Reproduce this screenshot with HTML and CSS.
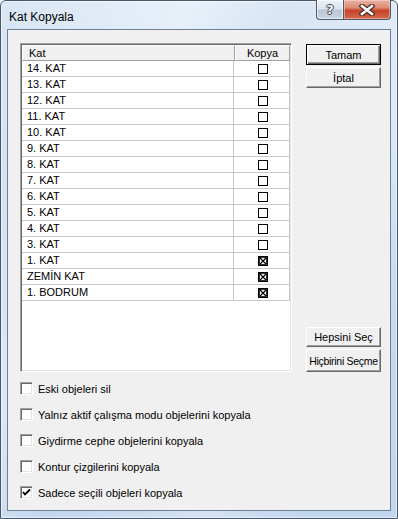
FILE: index.html
```html
<!DOCTYPE html>
<html>
<head>
<meta charset="utf-8">
<link rel="stylesheet" href="styles.css">
</head>
<body>
<div class="window">
  <div class="titlebar">
    <div class="title">Kat Kopyala</div>
    <div class="caption-buttons">
      <div class="cap-btn help"><span>?</span></div>
      <div class="cap-btn close">
        <svg width="16" height="12" viewBox="0 0 16 12">
          <path d="M3 2 L13 10 M13 2 L3 10" stroke="#4a2a24" stroke-width="5" stroke-linecap="square" fill="none"/>
          <path d="M3 2 L13 10 M13 2 L3 10" stroke="#fff" stroke-width="2.6" stroke-linecap="square" fill="none"/>
        </svg>
      </div>
    </div>
  </div>
  <div class="client">
    <div class="main">
      <div class="list">
        <div class="row header">
          <div class="c-name">Kat</div>
          <div class="c-copy">Kopya</div>
        </div>
        <div class="row"><div class="c-name">14. KAT</div><div class="c-copy"><span class="box"></span></div></div>
        <div class="row"><div class="c-name">13. KAT</div><div class="c-copy"><span class="box"></span></div></div>
        <div class="row"><div class="c-name">12. KAT</div><div class="c-copy"><span class="box"></span></div></div>
        <div class="row"><div class="c-name">11. KAT</div><div class="c-copy"><span class="box"></span></div></div>
        <div class="row"><div class="c-name">10. KAT</div><div class="c-copy"><span class="box"></span></div></div>
        <div class="row"><div class="c-name">9. KAT</div><div class="c-copy"><span class="box"></span></div></div>
        <div class="row"><div class="c-name">8. KAT</div><div class="c-copy"><span class="box"></span></div></div>
        <div class="row"><div class="c-name">7. KAT</div><div class="c-copy"><span class="box"></span></div></div>
        <div class="row"><div class="c-name">6. KAT</div><div class="c-copy"><span class="box"></span></div></div>
        <div class="row"><div class="c-name">5. KAT</div><div class="c-copy"><span class="box"></span></div></div>
        <div class="row"><div class="c-name">4. KAT</div><div class="c-copy"><span class="box"></span></div></div>
        <div class="row"><div class="c-name">3. KAT</div><div class="c-copy"><span class="box"></span></div></div>
        <div class="row"><div class="c-name">1. KAT</div><div class="c-copy"><svg class="xbox" width="10" height="10" viewBox="0 0 10 10"><rect x="0.5" y="0.5" width="9" height="9" fill="#fff" stroke="#000"/><rect x="1.5" y="1.5" width="7" height="7" fill="none" stroke="#000" stroke-width="0.8"/><path d="M2 2 L8 8 M8 2 L2 8" stroke="#000" stroke-width="1.3"/></svg></div></div>
        <div class="row"><div class="c-name">ZEMİN KAT</div><div class="c-copy"><svg class="xbox" width="10" height="10" viewBox="0 0 10 10"><rect x="0.5" y="0.5" width="9" height="9" fill="#fff" stroke="#000"/><rect x="1.5" y="1.5" width="7" height="7" fill="none" stroke="#000" stroke-width="0.8"/><path d="M2 2 L8 8 M8 2 L2 8" stroke="#000" stroke-width="1.3"/></svg></div></div>
        <div class="row"><div class="c-name">1. BODRUM</div><div class="c-copy"><svg class="xbox" width="10" height="10" viewBox="0 0 10 10"><rect x="0.5" y="0.5" width="9" height="9" fill="#fff" stroke="#000"/><rect x="1.5" y="1.5" width="7" height="7" fill="none" stroke="#000" stroke-width="0.8"/><path d="M2 2 L8 8 M8 2 L2 8" stroke="#000" stroke-width="1.3"/></svg></div></div>
      </div>
      <div class="buttons">
        <div class="btn-group">
          <div class="btn default">Tamam</div>
          <div class="btn">İptal</div>
        </div>
        <div class="btn-group">
          <div class="btn small">Hepsini Seç</div>
          <div class="btn tall">Hiçbirini Seçme</div>
        </div>
      </div>
    </div>
    <div class="options">
      <div class="opt"><span class="chk"></span><span>Eski objeleri sil</span></div>
      <div class="opt"><span class="chk"></span><span>Yalnız aktif çalışma modu objelerini kopyala</span></div>
      <div class="opt"><span class="chk"></span><span>Giydirme cephe objelerini kopyala</span></div>
      <div class="opt"><span class="chk"></span><span>Kontur çizgilerini kopyala</span></div>
      <div class="opt"><span class="chk checked"><svg width="9" height="9" viewBox="0 0 9 9"><path d="M1 4 L3 6.5 L8 1.5" stroke="#000" stroke-width="1.8" fill="none"/></svg></span><span>Sadece seçili objeleri kopyala</span></div>
    </div>
  </div>
</div>
</body>
</html>
```

FILE: styles.css
```css
* { box-sizing: border-box; }
html, body { margin: 0; padding: 0; }
body {
  width: 398px;
  height: 519px;
  overflow: hidden;
  background: #ffffff;
  font-family: "Liberation Sans", Arial, sans-serif;
  font-size: 11px;
  color: #000;
}
.window {
  width: 398px;
  height: 519px;
  border: 1px solid #48586a;
  border-radius: 6px 6px 0 0;
  background:
    linear-gradient(115deg, rgba(255,255,255,0) 0%, rgba(255,255,255,0.4) 30%, rgba(255,255,255,0) 45%, rgba(255,255,255,0.3) 70%, rgba(255,255,255,0) 85%),
    linear-gradient(180deg, #d9e6f5 0%, #c9dbf0 40%, #c2d6ee 100%);
  box-shadow: inset 0 0 0 1px rgba(255,255,255,0.55);
  display: flex;
  flex-direction: column;
}
.titlebar {
  height: 28px;
  display: flex;
  justify-content: space-between;
  align-items: flex-start;
}
.title {
  font-family: "Liberation Sans", Arial, sans-serif;
  font-size: 12px;
  color: #000;
  padding: 9px 0 0 8px;
}
.caption-buttons {
  display: flex;
  margin-right: 6px;
  margin-top: -1px;
}
.cap-btn {
  height: 20px;
  display: flex;
  align-items: center;
  justify-content: center;
  border: 1px solid #4b5a6c;
  border-top: none;
}
.cap-btn.help {
  width: 27px;
  border-right: none;
  border-radius: 0 0 0 4px;
  background: linear-gradient(180deg, #eef2f7 0%, #dde5ee 45%, #b9c7d7 55%, #c9d6e3 100%);
  box-shadow: inset 0 0 0 1px rgba(255,255,255,0.6);
}
.cap-btn.help span {
  font-family: "DejaVu Sans", sans-serif;
  font-weight: bold;
  font-size: 13px;
  color: #f4f6f8;
  text-shadow: 1px 0 0 #3d4652, -1px 0 0 #3d4652, 0 1px 0 #3d4652, 0 -1px 0 #3d4652;
  line-height: 1;
}
.cap-btn.close {
  width: 48px;
  border-radius: 0 0 4px 0;
  background: linear-gradient(180deg, #e9b3a5 0%, #dc8c74 40%, #c6442a 55%, #d2694c 100%);
  box-shadow: inset 0 0 0 1px rgba(255,220,210,0.5);
}
.client {
  flex: 1;
  margin: 0 6px 7px 6px;
  border: 1px solid #6e8096;
  background: #f0f0f0;
  padding: 13px 0 0 12px;
}
.main {
  display: flex;
  gap: 14px;
  height: 329px;
}
.list {
  width: 272px;
  height: 329px;
  background: #fff;
  border-top: 1px solid #a0a0a0;
  border-left: 1px solid #a0a0a0;
  border-right: 1px solid #fff;
  border-bottom: 1px solid #fff;
  box-shadow: inset 1px 1px 0 #696969, inset -1px -1px 0 #e3e3e3;
  padding: 1px;
  overflow: hidden;
}
.row {
  display: flex;
  height: 16px;
  border-bottom: 1px solid #c8c8c8;
}
.c-name {
  width: 212px;
  border-right: 1px solid #c8c8c8;
  padding-left: 5px;
  line-height: 15px;
  white-space: nowrap;
}
.c-copy {
  width: 56px;
  border-right: 1px solid #c8c8c8;
  display: flex;
  align-items: center;
  justify-content: center;
  padding-left: 3px;
}
.row.header {
  background: #f0f0f0;
  border-bottom: none;
}
.row.header .c-name {
  width: 213px;
  padding-left: 6px;
  border-top: 1px solid #fff;
  border-left: 1px solid #fff;
  border-right: 1px solid #a0a0a0;
  border-bottom: 1px solid #a0a0a0;
  line-height: 14px;
}
.row.header .c-copy {
  width: 55px;
  padding-left: 0;
  border-top: 1px solid #fff;
  border-left: 1px solid #fff;
  border-right: 1px solid #a0a0a0;
  border-bottom: 1px solid #a0a0a0;
  line-height: 14px;
  display: block;
  text-align: center;
}
.box {
  display: block;
  width: 10px;
  height: 10px;
  border: 1px solid #000;
  background: #fff;
}
.xbox { display: block; }
.buttons {
  width: 75px;
  display: flex;
  flex-direction: column;
  justify-content: space-between;
}
.btn-group {
  display: flex;
  flex-direction: column;
  gap: 2px;
}
.btn {
  height: 21px;
  background: #f0f0f0;
  border-top: 1px solid #fff;
  border-left: 1px solid #fff;
  border-right: 1px solid #696969;
  border-bottom: 1px solid #696969;
  box-shadow: inset -1px -1px 0 #a0a0a0;
  display: flex;
  align-items: center;
  justify-content: center;
  white-space: nowrap;
  overflow: hidden;
  font-size: 11px;
}
.btn.default {
  margin-top: 1px;
  border: 1px solid #000;
  box-shadow: inset 1px 1px 0 #fff, inset -1px -1px 0 #696969, inset -2px -2px 0 #a0a0a0;
}
.btn.small { height: 20px; }
.btn.tall {
  height: 23px;
  font-size: 10.5px;
  letter-spacing: -0.3px;
  padding: 0;
}
.options {
  margin-top: 10px;
  padding-left: 0;
  display: flex;
  flex-direction: column;
  gap: 13px;
}
.opt {
  display: flex;
  align-items: center;
  height: 13px;
  gap: 5px;
}
.chk {
  width: 13px;
  height: 13px;
  background: #fff;
  border-top: 1px solid #a0a0a0;
  border-left: 1px solid #a0a0a0;
  border-right: 1px solid #fff;
  border-bottom: 1px solid #fff;
  box-shadow: inset 1px 1px 0 #696969, inset -1px -1px 0 #e3e3e3;
  display: flex;
  align-items: center;
  justify-content: center;
}
.chk svg { display: block; }
```
